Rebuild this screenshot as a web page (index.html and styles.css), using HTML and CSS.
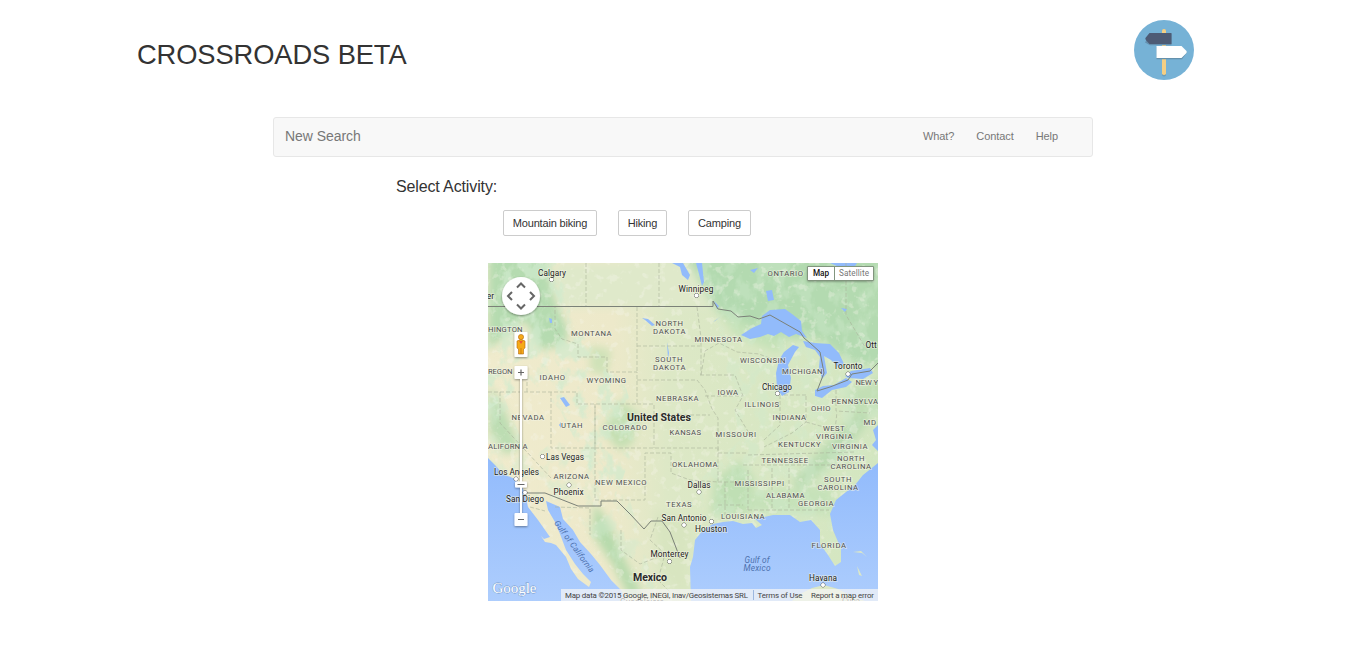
FILE: index.html
```
<!DOCTYPE html>
<html lang="en">
<head>
<meta charset="utf-8">
<title>Crossroads Beta</title>
<link rel="stylesheet" href="styles.css">
</head>
<body>
<header class="header">
  <h1 class="title">CROSSROADS BETA</h1>
  <svg class="logo" viewBox="0 0 60 60" width="60" height="60" aria-hidden="true">
    <circle cx="30" cy="30" r="30" fill="#76b2d6"/>
    <rect x="28" y="9.5" width="4" height="47" rx="1.8" fill="#6a9cb8"/>
    <rect x="28" y="9" width="4" height="46" rx="1.8" fill="#f4cf84"/>
    <path d="M11 22.500 16 14H37.500V25.300H16Z" fill="#648fae"/>
    <path d="M11.300 18.800Q11.300 18 12 17.300L15.500 13H37.500V24H15.500L12 20.300Z" fill="#4d5b75"/>
    <path d="M22.500 27H48L53 32.500 48 39.300H22.500Z" fill="#6491ad"/>
    <path d="M22.500 26H47.500L52.500 31Q53 32 52.500 33L47.500 38H22.500Z" fill="#fff"/>
  </svg>
</header>
<nav class="navbar">
  <a class="brand">New Search</a>
  <div class="links"><a>What?</a><a>Contact</a><a>Help</a></div>
</nav>
<main class="content">
  <h2 class="prompt">Select Activity:</h2>
  <div class="activities">
    <button class="btn mountain">Mountain biking</button>
    <button class="btn hiking">Hiking</button>
    <button class="btn camping">Camping</button>
  </div>
  <svg class="map" viewBox="488 263 390 338" width="390" height="338">
    <defs>
      <linearGradient id="land" x1="0" x2="1" y1="0" y2="0">
        <stop offset="0" stop-color="#f0ebcd"/><stop offset=".32" stop-color="#ede9ca"/><stop offset=".46" stop-color="#dde8c6"/><stop offset="1" stop-color="#d3e6c0"/>
      </linearGradient>
      <filter id="soft" x="-20%" y="-20%" width="140%" height="140%"><feGaussianBlur stdDeviation="4"/></filter>
      <filter id="mottle" filterUnits="userSpaceOnUse" x="488" y="263" width="390" height="338">
        <feTurbulence type="fractalNoise" baseFrequency=".07 .05" numOctaves="4" seed="8" result="n"/>
        <feColorMatrix in="n" values="0 0 0 0 .64  0 0 0 0 .83  0 0 0 0 .62  5 0 0 0 -2.300" result="c"/>
        <feComposite in="c" in2="SourceGraphic" operator="in"/>
      </filter>
      <filter id="specks" filterUnits="userSpaceOnUse" x="488" y="263" width="390" height="338">
        <feTurbulence type="fractalNoise" baseFrequency=".12" numOctaves="3" seed="14" result="n"/>
        <feColorMatrix in="n" values="0 0 0 0 .93  0 0 0 0 .93  0 0 0 0 .84  7 0 0 0 -4.100" result="c"/>
        <feComposite in="c" in2="SourceGraphic" operator="in"/>
      </filter>
      <filter id="shade" x="-30%" y="-30%" width="160%" height="160%"><feDropShadow dx="0" dy="1" stdDeviation="1" flood-opacity=".4"/></filter>
      <linearGradient id="ocean" x1="0" x2="0" y1="0" y2="1"><stop offset="0" stop-color="#92bbfc"/><stop offset="1" stop-color="#adcdfd"/></linearGradient>
    </defs>
    <rect x="488" y="263" width="390" height="338" fill="url(#land)"/>
    <g filter="url(#soft)">
      <path d="M488 250H545L555 300 568 330 565 345 540 350 525 320 488 350Z" fill="#b5dbb0"/>
      <path d="M555 263H720V307H560Z" fill="#dfe9ca"/>
      <path d="M682 250H890V365H855L820 340 790 338 740 335 715 308Z" fill="#b3dab0"/>
      <path d="M717 310 750 325 790 345 775 352 735 335Z" fill="#c5e2b8"/>
      <path d="M590 345 612 350 606 376 590 372Z" fill="#cfe2b8"/>
      <path d="M620 400 640 415 632 445 618 450 602 430Z" fill="#c4dfb2"/>
      <path d="M490 385 505 410 520 448 505 455 488 430Z" fill="#bcddb2"/>
      <path d="M715 480 740 460 755 480 748 515 711 515Z" fill="#bfdfb4"/>
      <path d="M750 492 830 485 838 515 750 512Z" fill="#c6e2b9"/>
      <path d="M793 480 845 425 865 405 869 420 840 458 800 490Z" fill="#b9dab0"/>
      <path d="M845 390 890 375V410L853 415Z" fill="#c2dfb5"/>
      <path d="M594 502 610 525 625 560 642 595 631 600 613 565 593 535Z" fill="#b6daac"/>
      <path d="M655 510 690 525 687 600 660 570Z" fill="#d8e5c0"/>
    </g>
    <path d="M488 263H560L572 320 600 355 625 385 640 430 615 500 590 470 560 410 530 380 488 410Z" filter="url(#mottle)" opacity=".7"/>
    <path d="M488 380 505 400 530 460 555 440 600 460 630 500 655 590 620 580 590 535 488 470Z" filter="url(#mottle)" opacity=".45"/>
    <path d="M690 263H878V601H700V480L740 440 715 310Z" filter="url(#mottle)" opacity=".38"/>
    <path d="M488 263H878V601H488Z" filter="url(#specks)" opacity=".32"/>
    <g class="water">
      <path class="ocean" d="M488 458 495 465 503 474 515 479 522 487 525 493 528 507 538 520 550 537 544 539 541 536 545 542 551 543 556 545 566 557 571 569 578 579 589 587 591 582 583 574 575 564 566 550 560 534 555 522 548 510 546 501 553 504 560 507 563 519 573 530 580 542 591 554 600 565 611 580 621 590 627 601H488Z"/>
      <path class="ocean" d="M691 601 690 567 693 557 695 540 703 530 713 524 723 522 733 521 743 524 752 523 756 528 762 525 755 519 773 515 790 515 800 522 811 520 820 530 820 544 828 555 835 566 841 562 841 549 833 530 830 514 836 500 846 492 855 485 863 475 878 463V601Z"/>
      <path d="M878 425 873 430 876 440 872 445 878 451Z"/>
      <path d="M741 335 752 328 761 324 762 316 770 310 785 309 792 314 801 321 802 331 807 338 796 334 789 337 781 332 774 336 768 334 760 337 750 339Z"/>
      <path d="M799 347 793 345 784 352 779 360 776 373 777 388 782 396 789 392 791 378 788 365 795 352Z"/>
      <path d="M803 341 815 343 830 344 839 353 844 364 839 368 831 360 824 356 827 373 822 379 819 367 820 357 815 350 806 347Z"/>
      <path d="M815 396 815 390 823 386 834 385 846 378 852 382 846 387 832 390 822 398Z"/>
      <path d="M845 376 851 371 870 368 873 373 863 379 848 378Z"/>
      <path d="M672 263 680 267 682 275 688 280 690 275 683 263ZM696 263 699 274 702 286 704 282 702 263ZM766 291 772 290 774 300 768 301ZM830 263 839 267 855 266 857 263Z"/>
      <path d="M560 398 564 397 570 405 566 407ZM549 318 552 319 552 323 550 323ZM714 301 719 306 717 309Z"/>
      <path d="M642 318 648 319 655 325 652 326 645 320ZM667 342 669 353 668 359M559 425 561 422 561 428Z"/>
      <path d="M750 270 758 268 754 273ZM713 322 720 317 715 321ZM841 308 847 309 845 312Z"/>
    </g>
    <g class="island">
      <path d="M800 594 812 588 824 585 838 589 853 597 865 601H792Z"/>
      <path d="M853 552 861 551 867 557 862 553ZM857 566 862 576 859 575Z"/>
    </g>
    <g class="states">
      <path d="M586 263V306M659 263V306M846 263V315L865 347M637 307V372M637 346H700M697 307 701 338V375M488 392H577V404H637V372H607V357H578V344L562 339 555 329V307M527 392V375M551 392V448H595V404M500 392V423L551 478M595 404V500M595 448H717M637 404H654V448M595 500H645V453H671V473L690 480 718 482V447M637 380H697L705 390 712 409 718 418V451M654 415H710M700 375H735L743 396 735 410 752 438M705 396H742M718 453H748M748 455 855 452M743 465H870M748 470V510M772 468V510M789 468V509M748 510H829M740 482H718M725 482V515M718 505H743M780 395V425L764 440M806 396V422L792 433 764 447M784 395H806M836 390V411L870 413M806 422 835 430 837 412"/>
      <path d="M701 375 705 351 719 343 737 352 759 354 777 361M621 530V550L640 564 658 557M658 517 650 540 665 554 658 580 670 592M530 507 545 511M555 507 590 508V535"/>
    </g>
    <g class="borders">
      <path d="M488 306.500H713V301L718 309 731 311 738 317 750 316 759 319 770 315 800 332 804 338 810 343 820 352 824 373 817 391 830 387 848 380 852 374 870 371 878 363"/>
      <path d="M524 493H545L578 506H601V501H617L631 515 644 529 651 521H662L670 532 680 558"/>
    </g>
    <g class="cities">
      <g class="dots"><circle cx="551.500" cy="279.500" r="2"/><circle cx="696.500" cy="295.500" r="2"/><circle cx="848" cy="374" r="2"/><circle cx="777.500" cy="393.500" r="2"/><circle cx="542.500" cy="456.500" r="2"/><circle cx="516" cy="479" r="2"/><circle cx="569" cy="485" r="2"/><circle cx="525" cy="492.500" r="2"/><circle cx="699" cy="492" r="2"/><circle cx="684" cy="525" r="2"/><circle cx="711.500" cy="521.500" r="2"/><circle cx="669.500" cy="561.500" r="2"/><circle cx="823" cy="585" r="2"/></g>
      <text x="552" y="275.500" textLength="28">Calgary</text><text x="696" y="291.500" textLength="35">Winnipeg</text>
      <text x="848" y="368.500" textLength="29">Toronto</text><text x="865.500" y="347.500" class="start">Ott</text>
      <text x="777" y="389.500" textLength="30">Chicago</text><text x="565" y="459.500" textLength="38">Las Vegas</text>
      <text x="516.500" y="474.500" textLength="45">Los Angeles</text><text x="568.500" y="494.500" textLength="30">Phoenix</text>
      <text x="525" y="502" textLength="38">San Diego</text><text x="699" y="487.500" textLength="23">Dallas</text>
      <text x="684" y="520.500" textLength="45">San Antonio</text><text x="711" y="532" textLength="32">Houston</text>
      <text x="669.500" y="556.500" textLength="38">Monterrey</text><text x="823" y="580.500" textLength="28">Havana</text>
      <text x="642" y="605" textLength="44">Guadalajara</text><text x="851" y="604" textLength="18">Cuba</text><text x="494" y="298.500" class="end">er</text>
    </g>
    <g class="regions">
      <text x="785.500" y="275.500" textLength="36">ONTARIO</text><text x="488" y="331.500" class="start" textLength="35">HINGTON</text>
      <text x="591.500" y="336" textLength="41">MONTANA</text><text x="669.500" y="326" textLength="28">NORTH</text><text x="669.500" y="333.500" textLength="33">DAKOTA</text>
      <text x="718.500" y="341.500" textLength="48">MINNESOTA</text><text x="669" y="362" textLength="28">SOUTH</text><text x="669.500" y="369.500" textLength="33">DAKOTA</text>
      <text x="763" y="363" textLength="46">WISCONSIN</text><text x="802.500" y="374" textLength="41">MICHIGAN</text><text x="488" y="374" class="start" textLength="25">REGON</text>
      <text x="552.500" y="380" textLength="26">IDAHO</text><text x="606.500" y="383" textLength="40">WYOMING</text><text x="855.500" y="384.500" class="start" textLength="23">NEW Y</text>
      <text x="677.500" y="400.500" textLength="43">NEBRASKA</text><text x="728" y="395" textLength="21">IOWA</text><text x="762" y="406.500" textLength="35">ILLINOIS</text>
      <text x="821" y="411" textLength="20">OHIO</text><text x="831.500" y="404" class="start" textLength="47">PENNSYLVA</text><text x="528" y="420" textLength="33">NEVADA</text>
      <text x="572" y="427.500" textLength="22">UTAH</text><text x="625" y="429.500" textLength="45">COLORADO</text><text x="789.500" y="419.500" textLength="34">INDIANA</text>
      <text x="685.500" y="434.500" textLength="32">KANSAS</text><text x="736" y="436.500" textLength="41">MISSOURI</text><text x="834" y="431" textLength="22">WEST</text>
      <text x="834.500" y="438.500" textLength="37">VIRGINIA</text><text x="870" y="424.500" textLength="13">MD</text><text x="799.500" y="447" textLength="43">KENTUCKY</text><text x="850" y="448.500" textLength="36">VIRGINIA</text>
      <text x="488" y="448.500" class="start" textLength="40">ALIFORNIA</text><text x="785" y="463" textLength="47">TENNESSEE</text><text x="851" y="461" textLength="28">NORTH</text><text x="851" y="468.500" textLength="41">CAROLINA</text>
      <text x="695" y="466.500" textLength="46">OKLAHOMA</text><text x="571.500" y="478.500" textLength="36">ARIZONA</text><text x="621" y="484.500" textLength="52">NEW MEXICO</text>
      <text x="759.500" y="486" textLength="50">MISSISSIPPI</text><text x="838" y="482" textLength="28">SOUTH</text><text x="838" y="489.500" textLength="41">CAROLINA</text>
      <text x="679" y="507" textLength="26">TEXAS</text><text x="785.500" y="498" textLength="39">ALABAMA</text><text x="816" y="506" textLength="36">GEORGIA</text><text x="743" y="519" textLength="44">LOUISIANA</text><text x="829" y="547.500" textLength="35">FLORIDA</text>
    </g>
    <g class="countries"><text x="659" y="421.300" textLength="64">United States</text><text x="650" y="580.500" textLength="34">Mexico</text></g>
    <g class="seas"><text x="757" y="563.300" textLength="25">Gulf of</text><text x="757" y="570.800" textLength="27">Mexico</text><text transform="translate(572 548) rotate(54)" textLength="62">Gulf of California</text></g>
    <text class="google" x="492.500" y="593" textLength="44">Google</text>
    <rect x="561" y="589" width="317" height="12" fill="#f5f5f5" fill-opacity=".72"/>
    <path d="M753.500 590V600" stroke="#9db7df"/>
    <g class="credits"><text x="565" y="597.500" textLength="183">Map data ©2015 Google, INEGI, Inav/Geosistemas SRL</text><text x="757.500" y="597.500" textLength="45">Terms of Use</text><text x="811" y="597.500" textLength="63">Report a map error</text></g>
    <g filter="url(#shade)">
      <circle cx="521" cy="296" r="19" fill="#fff"/>
      <rect x="514.500" y="332" width="13" height="25" rx="1" fill="#fff"/>
      <rect x="520" y="378" width="2" height="136" fill="#fff"/>
      <rect x="514.500" y="366" width="13" height="13" rx="1" fill="#fff"/>
      <rect x="514.500" y="513" width="13" height="13" rx="1" fill="#fff"/>
      <rect x="515" y="481.500" width="12" height="6" rx="1" fill="#fff"/>
      <rect x="807.500" y="266.500" width="66" height="14" fill="#fff"/>
    </g>
    <g class="arrows"><path d="M517 287.500 521 283.500 525 287.500M517 304.500 521 308.500 525 304.500M512 292 508 296 512 300M530 292 534 296 530 300"/></g>
    <path d="M518 372.500H524M521 369.500V375.500M518 519.500H524M517.500 484.500H524.500" fill="none" stroke="#666" stroke-width="1.200"/>
    <g fill="#f6aa18" stroke="#b36a13" stroke-width=".6"><path d="M517 341Q521 338 525 341V348L523.500 349V354H518.500V349L517 348Z"/><circle cx="521" cy="337" r="2.600"/><path d="M519 341 521 344 523 341Z" fill="#ec583b" stroke="none"/><path d="M521 348V354"/></g>
    <path d="M807.500 266.500H873.500V280.500H807.500ZM834.500 266.500V280.500" fill="none" stroke="#82957e"/>
    <text class="control active" x="821" y="276.300" textLength="16">Map</text><text class="control" x="854" y="276.300" textLength="30">Satellite</text>
  </svg>
</main>
</body>
</html>
```
FILE: styles.css
```
* { box-sizing: border-box; }
body { margin: 0; background: #fff; color: #333; font: 14px/20px "Liberation Sans", Arial, sans-serif; }
.header { display: flex; justify-content: space-between; align-items: flex-start; width: 1057px; height: 117px; margin-left: 137px; padding-top: 20px; }
.title { margin: 20px 0 0; font-size: 27.3px; line-height: 30px; font-weight: 400; letter-spacing: -.1px; }
.logo { display: block; }
.navbar { display: flex; align-items: center; justify-content: space-between; width: 820px; height: 40px; margin: 0 auto; padding: 0 34px 2px 11px; border: 1px solid #e7e7e7; border-radius: 3px; background: #f8f8f8; color: #777; }
.brand { font-size: 14px; letter-spacing: -.05px; }
.links { display: flex; gap: 22px; font-size: 11px; letter-spacing: -.08px; }
.content { width: 574px; margin: 0 auto; padding-top: 20px; }
.prompt { margin: 0; font-size: 16px; line-height: 20px; font-weight: 400; letter-spacing: -.13px; }
.activities { display: flex; gap: 21px; margin: 13px 0 27px 107px; }
.btn { height: 26px; padding: 0; border: 1px solid #ccc; border-radius: 2px; background: #fff; color: #333; font: 11px/24px "Liberation Sans", Arial, sans-serif; letter-spacing: -.17px; }
.mountain { width: 94px; }
.hiking { width: 49px; }
.camping { width: 63px; }
.map { display: block; margin-left: 92px; font-family: Roboto, sans-serif; overflow: hidden; }
.water { fill: #92bbfb; }
.ocean { fill: url(#ocean); }
.island { fill: #dce8c7; }
.states { fill: none; stroke: #a9b39b; stroke-width: .8; stroke-dasharray: 4 2; opacity: .75; }
.borders { fill: none; stroke: #7b8178; stroke-width: 1; }
.cities, .regions, .countries { text-anchor: middle; paint-order: stroke; stroke: #f4f5e7; stroke-opacity: .6; stroke-width: 1.5px; }
.cities { font-size: 8.3px; fill: #222; }
.regions { font-size: 7.7px; fill: #505050; letter-spacing: .4px; }
.countries { font-size: 10.6px; font-weight: 700; fill: #2b2b2b; }
.start { text-anchor: start; }
.end { text-anchor: end; }
.dots { fill: #fff; stroke: #444; stroke-opacity: 1; stroke-width: .9; }
.seas { text-anchor: middle; font-size: 8.3px; font-style: italic; fill: #4d71ae; }
.google { font: 15px "Liberation Serif", serif; fill: #fff; paint-order: stroke; stroke: #789bcb; stroke-width: .8px; }
.credits { font-size: 7.9px; fill: #444; }
.arrows { fill: none; stroke: #666; stroke-width: 2; }
.control { font-size: 8.2px; text-anchor: middle; fill: #777; }
.active { fill: #111; font-weight: 500; }
```
